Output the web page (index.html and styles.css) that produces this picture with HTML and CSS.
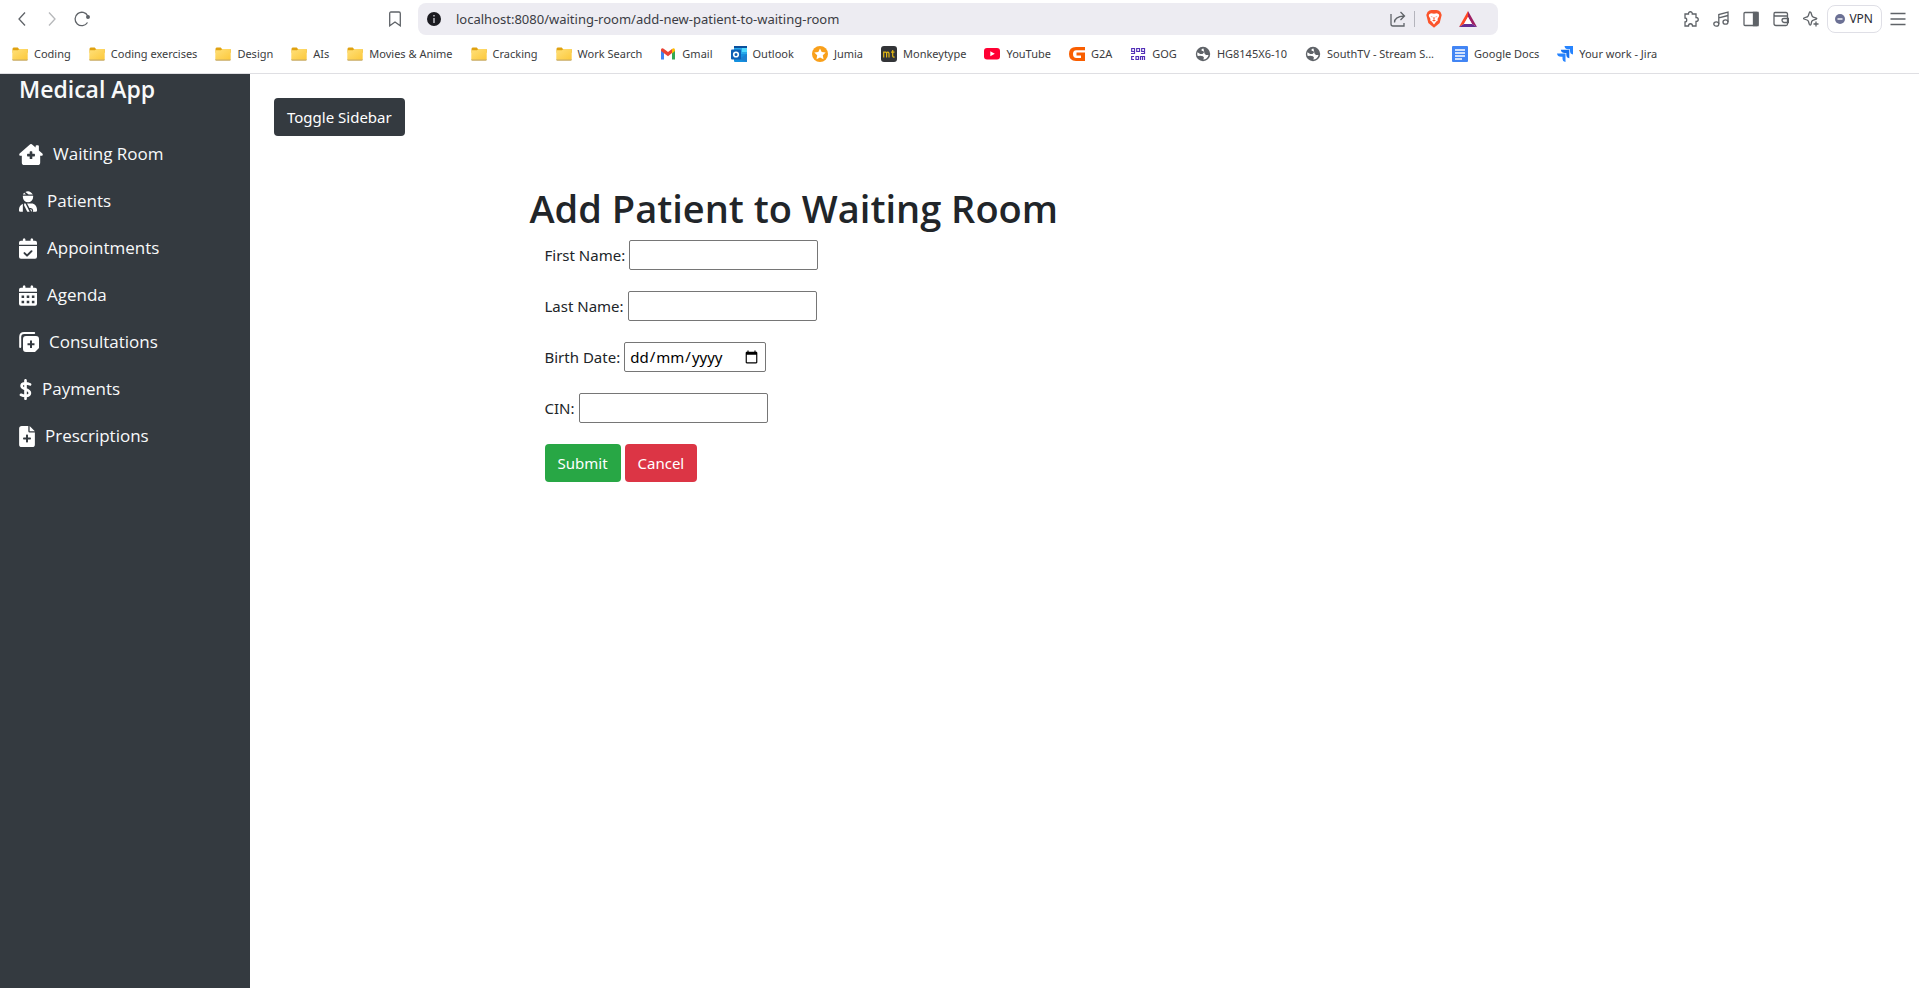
FILE: index.html
```html
<!DOCTYPE html>
<html lang="en-GB">
<head>
<meta charset="utf-8">
<title>Medical App</title>
<link rel="stylesheet" href="styles.css">
</head>
<body>
<svg class="defs" width="0" height="0" aria-hidden="true">
  <defs>
    <linearGradient id="gold" x1="0" y1="0" x2="1" y2="1"><stop offset="0" stop-color="#ffe07a"/><stop offset="1" stop-color="#fcc93c"/></linearGradient>
    <symbol id="folder" viewBox="0 0 16 16"><path d="M.5 3q0-1.500 1.200-1.500h4l1.300 1.500h8q.7 0 .7.800v3H.5z" fill="#e0a211"/><path d="M.3 13h15.400v.8q0 .9-.9.900H1.200q-.9 0-.9-.9z" fill="#c9ab62"/><path d="M.3 5q0-.8.800-.8h4.800L7.500 3h7.500q.7 0 .7.700v9q0 .8-.8.800H1.100q-.8 0-.8-.8z" fill="url(#gold)"/></symbol>
    <symbol id="globe" viewBox="0 0 16 16"><circle cx="8" cy="8" r="7.200" fill="#5f6368"/><path d="M8.500 2.600C6.800 2.800 6 4 6.800 4.700L8.500 5.200 9 6.500 7.500 8H5.200L2.500 6.200C2 8 2.300 9 2.800 10L5.200 9.800 8 10.300l1 1.500-.8 1.700c2.800 0 4.800-2 5.300-4.500L11 9 9.500 7.500z" fill="#fff"/></symbol>
  </defs>
</svg>

<header class="browser">
  <div class="toolbar">
    <div class="toolbar-start">
      <button class="tool" aria-label="Back"><svg width="16" height="16" viewBox="0 0 16 16"><path d="M11 1.500 5 8l6 6.500"/></svg></button>
      <button class="tool faded" aria-label="Forward"><svg width="16" height="16" viewBox="0 0 16 16"><path d="m5 1.500 6 6.500-6 6.500"/></svg></button>
      <button class="tool" aria-label="Reload"><svg width="16" height="16" viewBox="0 0 16 16"><path d="M13.500 11.500A6.700 6.700 0 1 1 13.800 5"/><circle cx="14" cy="6" r="1.300" fill="#5f6368"/></svg></button>
      <button class="tool bookmark-this" aria-label="Bookmark this page"><svg width="16" height="16" viewBox="0 0 16 16"><path d="M2.700 2.500q0-1.500 1.300-1.500h8q1.300 0 1.300 1.500v12.300L8 11l-5.300 3.800z"/></svg></button>
    </div>
    <div class="address">
      <svg width="14" height="14" viewBox="0 0 14 14"><circle cx="7" cy="7" r="7" fill="#1b1b20"/><path d="M6.200 3h1.600v1.500H6.200zM6.200 6h1.600v5H6.200z" fill="#b5b5bb"/></svg>
      <input class="url" type="text" aria-label="Address" value="localhost:8080/waiting-room/add-new-patient-to-waiting-room">
      <button class="tool" aria-label="Share"><svg width="16" height="16" viewBox="0 0 16 16"><path d="M1 3v10q0 2 2 2h11v-3M4.500 11.500c0-4 2.500-6 9.500-6.500M10.500 1l4 4-4 4"/></svg></button>
      <span class="divider"></span>
      <button class="tool shield" aria-label="Brave Shields"><svg width="16" height="18" viewBox="0 0 16 18"><path d="m3.500.5 2-.5h5l2 .5L14.500 2l1.200 3-2 8L8 17.800 2.300 13l-2-8L1.500 2z" fill="#fb542b"/><path d="m3 4.500 2-1.300 3 .6 3-.6 2 1.300.2 1.500-1.700 3 .3 1.500-1.500 1L8 14.500l-2.300-3-1.500-1L4.500 9 2.800 6z" fill="#fff"/><path d="m4.500 6.300 2 .5-.3.700zM11.500 6.300l-2 .5.300.7zM7.600 7h.8l.3 2.500H7.300zM6 10.500l2-.8 2 .8-2 1z" fill="#fb542b"/></svg></button>
      <button class="tool" aria-label="Brave Rewards"><svg width="18" height="16" viewBox="0 0 18 16"><path d="M9 0 0 16l5-3 4-7z" fill="#ff4724"/><path d="m9 0 9 16-5-3-4-7z" fill="#9e1f63"/><path d="m0 16 5-3h8l5 3z" fill="#662d91"/><path d="m9 6 4 7H5z" fill="#fff"/></svg></button>
    </div>
    <div class="toolbar-end">
      <button class="tool" aria-label="Extensions"><svg width="16" height="16" viewBox="0 0 16 16"><path d="M2 3h3.500c-.3-3 4-3 3.800 0H13v3.500c3 0 3 4 0 4V15H9.500c0-3-4-3-4 0H2v-4c2.300 0 2.300-4 0-4z"/></svg></button>
      <button class="tool" aria-label="Media"><svg width="16" height="16" viewBox="0 0 16 16"><ellipse cx="3.300" cy="13" rx="2.500" ry="2.200"/><ellipse cx="12.500" cy="11" rx="2.500" ry="2.200"/><path d="M5.800 13V3.500L15 1v10M5.800 6.800 15 4.500"/></svg></button>
      <button class="tool" aria-label="Side panel"><svg width="16" height="16" viewBox="0 0 16 16"><rect x="1" y="1.500" width="14" height="13" rx="1"/><path d="M10.500 1.500H15v13h-4.500z" fill="#5f6368"/></svg></button>
      <button class="tool" aria-label="Wallet"><svg width="16" height="16" viewBox="0 0 16 16"><path d="M14.500 5V3q0-1.500-1.500-1.500H2Q1 1.500 1 3v9.500q0 2 2 2h10q1.500 0 1.500-1.500V5H2.500Q1 5 1 3M15.500 7.500H11q-2 0-2 1.800T11 11.500h4.500z"/></svg></button>
      <button class="tool" aria-label="Leo AI"><svg width="16" height="16" viewBox="0 0 16 16"><path d="M7 .8q.8 0 1 1l1 3q.3 1 1.300 1.300l3 1q1 .4 0 1l-3 1Q9 9.500 8.700 10.500L8 13.300q-1 1.500-1.700 0L5.500 10.500Q5.200 9.500 4 9L1 8q-1-.5 0-1l3-1q1-.2 1.300-1.300l1-3Q6.500.8 7 .8zM13 10.500v5M10.500 13h5"/></svg></button>
      <button class="vpn"><svg width="10" height="10" viewBox="0 0 10 10"><circle cx="5" cy="5" r="5" fill="#6b7094"/><path d="M2.500 5h5" stroke="#fff" stroke-width="1.400"/></svg>VPN</button>
      <button class="tool" aria-label="Menu"><svg width="16" height="16" viewBox="0 0 16 16"><path d="M.5 2.500h15M.5 8h15M.5 13.500h15"/></svg></button>
    </div>
  </div>
  <nav class="bookmarks" aria-label="Bookmarks">
    <a href="#"><svg><use href="#folder"/></svg>Coding</a>
    <a href="#"><svg><use href="#folder"/></svg>Coding exercises</a>
    <a href="#"><svg><use href="#folder"/></svg>Design</a>
    <a href="#"><svg><use href="#folder"/></svg>AIs</a>
    <a href="#"><svg><use href="#folder"/></svg>Movies &amp; Anime</a>
    <a href="#"><svg><use href="#folder"/></svg>Cracking</a>
    <a href="#"><svg><use href="#folder"/></svg>Work Search</a>
    <a href="#"><svg viewBox="0 0 16 16"><path d="M1 4v9.500h3V6z" fill="#4285f4"/><path d="M15 4v9.500h-3V6z" fill="#34a853"/><path d="M1 3.500Q2 1.500 4 3l4 3 4-3v4L8 10.300 4 7.300 1 5z" fill="#ea4335"/><path d="M12 3q2-1.500 3 .5V5l-3 2.500z" fill="#fbbc04"/></svg>Gmail</a>
    <a href="#"><svg viewBox="0 0 16 16"><path d="M3 0h13v9H3z" fill="#28a8ea"/><path d="M3 0h13v2H3z" fill="#0a4f9c"/><path d="M11 2h5v4h-5z" fill="#50d9ff"/><path d="M3 8h13v8H4q-1 0-1-1z" fill="#1490df"/><path d="m16 8-8 5 8 3z" fill="#1b7fd0"/><rect y="3.500" width="10" height="10" rx="1" fill="#0f60b6"/><circle cx="5" cy="8.500" r="2.300" fill="none" stroke="#fff" stroke-width="1.600"/></svg>Outlook</a>
    <a href="#"><svg viewBox="0 0 16 16"><circle cx="8" cy="8" r="8" fill="#f9a01b"/><path d="m8 2.500 1.700 3.600 4 .5-2.900 2.700.7 4L8 11.400l-3.500 1.900.7-4-2.900-2.700 4-.5z" fill="#fff"/></svg>Jumia</a>
    <a href="#"><svg viewBox="0 0 16 16"><rect width="16" height="16" rx="3" fill="#323437"/><path d="M2.700 11.500V6.200h2q.9 0 .9 1v4.300m0-4.300q0-1 1-1t1.400 1v4.300M11.700 4v6q0 1.300 2 1M10 6.200h3.500" fill="none" stroke="#e2b714" stroke-width="1.200"/></svg>Monkeytype</a>
    <a href="#"><svg viewBox="0 0 16 16"><rect y="2" width="16" height="11.500" rx="3" fill="#f03"/><path d="m6.300 5.200 4.500 2.500-4.500 2.600z" fill="#fff"/></svg>YouTube</a>
    <a href="#"><svg viewBox="0 0 16 16"><path d="M16 1H7Q0 1 0 8t7 7h9V6.500H7.500v3H12V12H7.500Q4 12 4 8t3.500-3.800H16z" fill="#f95e00"/></svg>G2A</a>
    <a href="#"><svg viewBox="0 0 16 16"><path d="M4.500 5.500H1.700v-3h2.800v5H1M6.700 2.500h2.800v3H6.700zM14.500 5.500h-2.800v-3h2.800v5H11M4 10.500H1.700v3H4M6 10.500h2.500v3H6zM10.500 14v-3.500h4V14M12.500 10.500V14" fill="none" stroke="#5330b8" stroke-width="1.200"/></svg>GOG</a>
    <a href="#"><svg><use href="#globe"/></svg>HG8145X6-10</a>
    <a href="#"><svg><use href="#globe"/></svg>SouthTV - Stream S...</a>
    <a href="#"><svg viewBox="0 0 16 16"><rect width="16" height="16" rx="1" fill="#4285f4"/><path d="M3 4h10M3 7h10M3 10h10M3 13h7" stroke="#fff" stroke-width="1.500"/></svg>Google Docs</a>
    <a href="#"><svg viewBox="0 0 16 16"><path d="M7.500 0H16v8.500q-3-.5-3-3.500V3.300h-1.500Q8 3.500 7.500 0z" fill="#2684ff"/><path d="M3.800 3.700h8.500v8.500q-3-.5-3-3.500V7H7.800Q4.300 7 3.800 3.700z" fill="#1671ee"/><path d="M0 7.500h8.500V16q-3-.5-3-3.500v-1.700H4Q.5 10.700 0 7.500z" fill="#2684ff"/></svg>Your work - Jira</a>
  </nav>
</header>

<div class="app">
  <aside class="sidebar">
    <h2 class="brand">Medical App</h2>
    <nav class="menu" aria-label="Main">
      <a href="#"><svg width="24" height="21" viewBox="0 0 576 512"><path fill-rule="evenodd" d="M268 8q20-16 40 0l92 80V56q0-24 24-24h32q24 0 24 24v103l85 75q22 22-5 54h-48v160q0 64-64 64H128q-64 0-64-64V288H16q-27-32-5-54zM256 192v48h-48q-16 0-16 16v32q0 16 16 16h48v48q0 16 16 16h32q16 0 16-16v-48h48q16 0 16-16v-32q0-16-16-16h-48v-48q0-16-16-16h-32q-16 0-16 16z"/></svg>Waiting Room</a>
      <a href="#"><svg width="18" height="21" viewBox="0 0 448 512"><path d="M240 80H342.700C316 33 269 0 224 0c-24 0-46 6-66 17zM98 80h74L131 36C116 48 105 63 98 80zM96 112v32a128 128 0 0 0 256 0v-32zM100 310C40 333 0 392 0 454v30q0 28 30 28h66V310zM138 304h-10v51l79 157h58L162 305zM310 304H200l60 112h32q56 4 60 60 0 20-8 36h74q30 0 30-28v-30C448 371 390 304 310 304zM276 448l34 64q14-10 10-36-4-26-30-28z"/></svg>Patients</a>
      <a href="#"><svg width="18" height="21" viewBox="0 0 448 512"><path fill-rule="evenodd" d="M128 0q32 4 32 32v32h128V32q0-28 32-32 32 4 32 32v32h48q48 0 48 48v48H0v-48q0-48 48-48h48V32Q96 4 128 0zM0 192h448v272q0 48-48 48H48q-48 0-48-48zm329 113q-17-17-34 0l-95 95-47-47q-17-17-34 0-15 17 0 34l64 64q17 15 34 0l112-112q15-17 0-34z"/></svg>Appointments</a>
      <a href="#"><svg width="18" height="21" viewBox="0 0 448 512"><path fill-rule="evenodd" d="M128 0q32 4 32 32v32h128V32q0-28 32-32 32 4 32 32v32h48q48 0 48 48v48H0v-48q0-48 48-48h48V32Q96 4 128 0zM0 192h448v272q0 48-48 48H48q-48 0-48-48zM64 256v64h64v-64zm128 0v64h64v-64zm128 0v64h64v-64zM64 384v64h64v-64zm128 0v64h64v-64zm128 0v64h64v-64z"/></svg>Agenda</a>
      <a href="#"><svg width="20" height="21" viewBox="0 0 20 21"><path d="M1.200 15V5q0-4 4-4h10" fill="none" stroke="#fff" stroke-width="2" stroke-linecap="round"/><path fill-rule="evenodd" d="M7 4h10q3 0 3 3v9l-4 4H7q-3 0-3-3V7q0-3 3-3zm4 4.500v2.700H8.500v2H11V16h2v-2.800h2.500v-2H13V8.500z"/></svg>Consultations</a>
      <a href="#"><svg width="13" height="21" viewBox="0 0 320 512"><path d="M160 30v452M272 130C180 88 64 92 64 170c0 94 204 68 204 172 0 82-132 92-220 44" fill="none" stroke="#fff" stroke-width="66" stroke-linecap="round"/></svg>Payments</a>
      <a href="#"><svg width="16" height="21" viewBox="0 0 384 512"><path fill-rule="evenodd" d="M64 0h160v128q0 32 32 32h128v288q0 64-64 64H64q-64 0-64-64V64Q0 0 64 0zm192 0 128 128H256zm-88 224v56h-56q-16 0-16 16v16q0 16 16 16h56v56q0 16 16 16h16q16 0 16-16v-56h56q16 0 16-16v-16q0-16-16-16h-56v-56q0-16-16-16h-16q-16 0-16 16z"/></svg>Prescriptions</a>
    </nav>
  </aside>
  <main class="content">
    <button class="btn btn-dark">Toggle Sidebar</button>
    <section class="container">
      <h1>Add Patient to Waiting Room</h1>
      <form class="patient-form">
        <div class="field"><label for="first">First Name:</label><input id="first" type="text"></div>
        <div class="field"><label for="last">Last Name:</label><input id="last" type="text"></div>
        <div class="field"><label for="birth">Birth Date:</label><input id="birth" type="date"></div>
        <div class="field"><label for="cin">CIN:</label><input id="cin" type="text"></div>
        <div class="actions"><button type="submit" class="btn btn-success">Submit</button><button type="button" class="btn btn-danger">Cancel</button></div>
      </form>
    </section>
  </main>
</div>
</body>
</html>
```
FILE: styles.css
```css
* { box-sizing: border-box; }

body {
  margin: 0;
  min-height: 100vh;
  display: flex;
  flex-direction: column;
  background: #fff;
  color: #212529;
  font: 15px/24px "Noto Sans", "Open Sans", sans-serif;
}

button, input { font: inherit; }
a { color: inherit; text-decoration: none; }
.defs { position: absolute; }

/* Browser chrome */
.browser { border-bottom: 1px solid #dfdfe3; }

.toolbar {
  display: grid;
  grid-template-columns: 418px 1fr 421px;
  padding: 3px 0;
}

.toolbar-start, .toolbar-end, .address { display: flex; align-items: center; }
.toolbar-start { padding: 0 15px 0 14px; gap: 14px; }
.toolbar-end { justify-content: flex-end; padding-right: 13px; gap: 14px; }

.tool {
  display: flex;
  padding: 0;
  border: 0;
  background: none;
}
.tool svg {
  fill: none;
  stroke: #5f6368;
  stroke-width: 1.3;
}
.address .tool:nth-of-type(n+2) svg { stroke: none; }
.faded { opacity: 0.45; }
.bookmark-this { margin-left: auto; }

.address {
  height: 32px;
  padding: 0 21px 0 9px;
  border-radius: 8px;
  background: #edecf2;
}
.url {
  flex: 1;
  min-width: 0;
  margin-left: 15px;
  padding: 0;
  border: 0;
  background: none;
  color: #3b3c44;
  font-size: 13px;
}
.divider { width: 1px; height: 16px; margin: 0 11px 0 8px; background: #b4b4bc; }
.shield { margin-right: 17px; }

.vpn {
  display: flex;
  align-items: center;
  gap: 4px;
  height: 28px;
  margin: 0 -6px;
  padding: 0 8px 0 7px;
  border: 1px solid #dfdfe6;
  border-radius: 8px;
  background: #fff;
  color: #2b2c33;
  font-size: 12px;
}

.bookmarks {
  display: flex;
  gap: 18px;
  padding: 4px 12px 7px;
  overflow: hidden;
  color: #3b3c40;
  font-size: 11px;
  white-space: nowrap;
}
.bookmarks a { display: flex; align-items: center; gap: 6px; }
.bookmarks svg { width: 16px; height: 16px; flex: none; }

/* Application */
.app { flex: 1; display: flex; }

.sidebar {
  width: 250px;
  flex: none;
  padding: 0 19px;
  background: #343a40;
  color: #f8f9fa;
  font-family: "Open Sans", "Noto Sans", sans-serif;
}
.brand { margin: 0 0 38px; font-size: 23px; font-weight: 600; line-height: 30px; }
.menu { display: flex; flex-direction: column; gap: 23px; font-size: 17px; }
.menu a { display: flex; align-items: center; gap: 10px; }
.menu svg { flex: none; fill: #fff; }

.content { flex: 1; min-width: 0; padding: 24px; }
.container { max-width: 1140px; margin: 48px auto 0; padding: 0 15px; }

h1 {
  margin: 0 0 8px;
  font-family: "Open Sans", "Noto Sans", sans-serif;
  font-size: 38px;
  font-weight: 600;
  line-height: 48px;
}

.patient-form { display: flex; flex-direction: column; gap: 21px; padding: 0 15px; }
.field, .actions { display: flex; align-items: center; gap: 4px; }
.field input {
  width: 189px;
  height: 30px;
  padding: 1px 4px;
  border: 1px solid #767676;
  border-radius: 2px;
  background: #fff;
  color: #000;
}
.field input[type="date"] { width: 142px; }

/* Day, month, year order; the separators fill the columns in between */
::-webkit-datetime-edit-fields-wrapper {
  display: inline-grid;
  grid-template-columns: repeat(5, auto);
}
::-webkit-datetime-edit-text { grid-row: 1; }
::-webkit-datetime-edit-day-field { grid-row: 1; grid-column: 1; }
::-webkit-datetime-edit-month-field { grid-row: 1; grid-column: 3; }
::-webkit-datetime-edit-year-field { grid-row: 1; grid-column: 5; }

.btn {
  height: 38px;
  padding: 0 13px;
  border: 0;
  border-radius: 4px;
  color: #fff;
}
.btn-dark { background: #343a40; }
.btn-success { background: #28a745; }
.btn-danger { background: #dc3545; }
```
